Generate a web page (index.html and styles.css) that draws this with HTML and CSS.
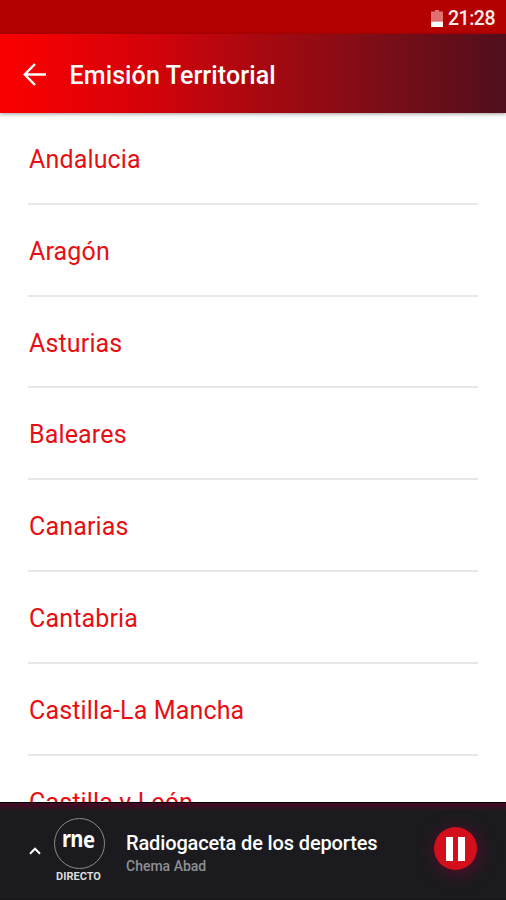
FILE: index.html
```
<!DOCTYPE html>
<html lang="es">
<head>
    <meta charset="UTF-8">
    <meta name="viewport" content="width=device-width, initial-scale=1.0">
    <title>Emisión Territorial</title>
    <link rel="stylesheet" href="styles.css">
</head>
<body>

    <div class="app">
        <div class="status-bar">
            <svg class="battery" width="12" height="17" viewBox="0 0 12 17">
                <path d="M4 0h4v1.5h4v10H0v-10h4z" fill="#e07070"/>
                <path d="M0 11.5h12V17H0z" fill="#fff"/>
            </svg>
            <span class="clock">21:28</span>
        </div>

        <header class="toolbar">
            <svg class="back" width="24" height="24" viewBox="0 0 24 24">
                <path d="M23 11.5H2M12 1L1.8 11.5 12 22" fill="none" stroke="#fff" stroke-width="2.5"/>
            </svg>
            <h1>Emisión Territorial</h1>
        </header>

        <ul class="list">
            <li>Andalucia</li>
            <li>Aragón</li>
            <li>Asturias</li>
            <li>Baleares</li>
            <li>Canarias</li>
            <li>Cantabria</li>
            <li>Castilla-La Mancha</li>
            <li>Castilla y León</li>
        </ul>

        <footer class="player">
            <svg class="arrow-up" width="12" height="8" viewBox="0 0 12 8">
                <path d="M1 6.7L6 1.7l5 5" fill="none" stroke="#fff" stroke-width="2"/>
            </svg>
            <div class="station">
                <div class="logo"><span>rn</span><span class="logo-e">e</span></div>
                <div class="live">DIRECTO</div>
            </div>
            <div class="info">
                <p class="program">Radiogaceta de los deportes</p>
                <p class="host">Chema Abad</p>
            </div>
            <button class="btn-pause">
                <svg width="20" height="24" viewBox="0 0 20 24">
                    <path d="M0 0h7v24H0zM12 0h7v24h-7z" fill="#fff"/>
                </svg>
            </button>
        </footer>
    </div>

</body>
</html>
```

FILE: styles.css
```
* {
    box-sizing: border-box;
}
body {
    margin: 0;
    font-family: Roboto, sans-serif;
    background: white;
}
.app {
    display: flex;
    flex-direction: column;
    height: 900px;
    overflow: hidden;
}
.status-bar {
    display: flex;
    flex: none;
    justify-content: flex-end;
    align-items: center;
    height: 34px;
    padding: 3px 11px 0 0;
    background: #b40000;
}
.battery {
    margin-right: 5px;
}
.clock {
    width: 47px;
    color: #ffeaea;
    font-size: 19.5px;
    font-weight: 500;
    letter-spacing: -0.5px;
    white-space: nowrap;
}
.toolbar {
    display: flex;
    flex: none;
    align-items: center;
    height: 79px;
    padding: 2px 23px 0;
    background: linear-gradient(to right, #fa0000 0%, #f60002 5%, #cf030a 32%, #a90810 51%, #7c0d17 75%, #500f1c 100%);
    box-shadow: 0 1px 4px rgba(0, 0, 0, 0.4);
}
h1 {
    margin: 1px 0 0 22.5px;
    color: #fff;
    font-size: 25px;
    font-weight: 500;
    letter-spacing: 0.12px;
    white-space: nowrap;
}
.list {
    flex: 1;
    min-height: 0;
    margin: 0;
    padding: 0 28px;
    overflow: hidden;
    list-style: none;
}
.list li {
    height: 91.8px;
    padding: 32px 1px 0;
    border-bottom: 2px solid #e8e8e8;
    color: #e60f14;
    font-size: 25px;
    line-height: 30px;
    letter-spacing: 0.15px;
}
.player {
    display: flex;
    flex: none;
    align-items: flex-start;
    height: 98px;
    padding: 0 29px;
    border-top: 1px solid #000;
    background: linear-gradient(to bottom, #460a23 0, #3c0c22 3px, #1b1b1f 8px, #1b1b1f 95px, #1a1318 97px);
}
.arrow-up {
    margin-top: 44px;
}
.station {
    width: 51px;
    margin: 15px 0 0 13px;
}
.logo {
    display: flex;
    justify-content: center;
    width: 51px;
    height: 51px;
    padding: 5px 5px 0 0;
    border: 1px solid #8b8b8e;
    border-radius: 50%;
    color: #fff;
    font-family: "Noto Sans", sans-serif;
    font-size: 24px;
    font-weight: 700;
    line-height: 28px;
    letter-spacing: -0.8px;
}
.logo span {
    display: block;
    transform: scaleX(0.84);
    transform-origin: right;
}
.logo .logo-e {
    padding-top: 1px;
    transform-origin: left;
}
.live {
    width: 47px;
    margin-left: 1px;
    color: #ddd;
    font-size: 11px;
    font-weight: 700;
    line-height: 16px;
    text-align: center;
}
.info {
    flex: 1;
    margin: 27px 0 0 21px;
    white-space: nowrap;
}
.info p {
    margin: 0;
}
.program {
    color: #fff;
    font-size: 20px;
    font-weight: 500;
    line-height: 26px;
    letter-spacing: -0.14px;
}
.host {
    color: #8f8f92;
    font-size: 14px;
    font-weight: 500;
    line-height: 20px;
}
.btn-pause {
    display: flex;
    justify-content: center;
    align-items: center;
    width: 43px;
    height: 43px;
    margin-top: 24px;
    padding: 0;
    border: none;
    border-radius: 50%;
    background: #d20f1b;
    box-shadow: 2px 3px 16px 2px rgba(120, 0, 50, 0.55);
}
```
